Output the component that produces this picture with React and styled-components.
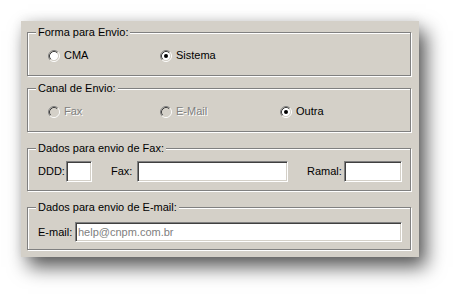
import React from "react";
import styled, { createGlobalStyle } from "styled-components";

const GlobalStyle = createGlobalStyle`
  body {
    margin: 0;
    background: #ffffff;
    font-family: "Liberation Sans", Arial, sans-serif;
    font-size: 11px;
    color: #000000;
  }
`;

const Page = styled.div`
  padding: 21px 0 0 21px;
  width: 461px;
  height: 299px;
  box-sizing: border-box;
`;

const Panel = styled.div`
  width: 398px;
  height: 236px;
  box-sizing: border-box;
  background: #d4d0c8;
  padding: 11px 8px 0 6px;
  box-shadow: 7px 10px 18px rgba(0, 0, 0, 0.66), 0 -2px 10px rgba(0, 0, 0, 0.07);
`;

const Group = styled.div`
  box-sizing: border-box;
  width: 384px;
  height: ${(p) => p.$h}px;
  margin-top: ${(p) => p.$mt || 0}px;
  border: 1px solid #808080;
  box-shadow: 1px 1px 0 #ffffff, inset 1px 1px 0 #ffffff;
`;

const Legend = styled.div`
  width: fit-content;
  margin: -7px 0 0 8px;
  padding: 0 2px;
  line-height: 13px;
  background: #d4d0c8;
`;

const RadioRow = styled.div`
  display: grid;
  grid-template-columns: 112px 120px auto;
  margin-top: 10px;
  padding-left: 20px;
`;

const RadioItem = styled.label`
  display: flex;
  align-items: center;
  gap: 4px;
  line-height: 13px;
  color: ${(p) => (p.$disabled ? "#808080" : "#000000")};
  text-shadow: ${(p) => (p.$disabled ? "1px 1px 0 #ffffff" : "none")};
`;

const FieldRow = styled.div`
  display: flex;
  align-items: center;
  margin-top: ${(p) => p.$mt}px;
  padding-left: 10px;
`;

const FieldLabel = styled.span`
  width: ${(p) => p.$w}px;
  margin-left: ${(p) => p.$ml || 0}px;
  line-height: 13px;
  flex-shrink: 0;
`;

const TextBox = styled.input`
  box-sizing: border-box;
  width: ${(p) => p.$w}px;
  height: ${(p) => p.$h || 21}px;
  margin: 0;
  padding: 0 2px;
  border: 1px solid;
  border-color: #808080 #ffffff #ffffff #808080;
  box-shadow: inset 1px 1px 0 #404040, inset -1px -1px 0 #d4d0c8;
  background: #ffffff;
  font-family: "Liberation Sans", Arial, sans-serif;
  font-size: 11px;
  color: #808080;
  outline: none;
  flex-shrink: 0;
`;

function RadioMark({ checked, disabled }) {
  return (
    <svg width="12" height="12" viewBox="0 0 12 12">
      <circle cx="6" cy="6" r="4.2" fill={disabled ? "#d4d0c8" : "#ffffff"} />
      <path d="M2.11 9.89 A5.5 5.5 0 0 1 9.89 2.11" fill="none" stroke="#808080" strokeWidth="1" />
      <path d="M9.89 2.11 A5.5 5.5 0 0 1 2.11 9.89" fill="none" stroke="#ffffff" strokeWidth="1" />
      <path d="M2.82 9.18 A4.5 4.5 0 0 1 9.18 2.82" fill="none" stroke="#404040" strokeWidth="1" />
      <path d="M9.18 2.82 A4.5 4.5 0 0 1 2.82 9.18" fill="none" stroke="#d4d0c8" strokeWidth="1" />
      {checked && <circle cx="6" cy="6" r="2" fill={disabled ? "#808080" : "#000000"} />}
    </svg>
  );
}

function Radio({ label, checked, disabled }) {
  return (
    <RadioItem $disabled={disabled}>
      <RadioMark checked={checked} disabled={disabled} />
      {label}
    </RadioItem>
  );
}

export default function App() {
  return (
    <Page>
      <GlobalStyle />
      <Panel>
        <Group $h={44}>
          <Legend>Forma para Envio:</Legend>
          <RadioRow>
            <Radio label="CMA" />
            <Radio label="Sistema" checked />
          </RadioRow>
        </Group>

        <Group $h={44} $mt={12}>
          <Legend>Canal de Envio:</Legend>
          <RadioRow>
            <Radio label="Fax" disabled />
            <Radio label="E-Mail" disabled />
            <Radio label="Outra" checked />
          </RadioRow>
        </Group>

        <Group $h={43} $mt={16}>
          <Legend>Dados para envio de Fax:</Legend>
          <FieldRow $mt={6}>
            <FieldLabel $w={28}>DDD:</FieldLabel>
            <TextBox $w={26} />
            <FieldLabel $w={26} $ml={19}>Fax:</FieldLabel>
            <TextBox $w={151} />
            <FieldLabel $w={37} $ml={19}>Ramal:</FieldLabel>
            <TextBox $w={58} />
          </FieldRow>
        </Group>

        <Group $h={43} $mt={16}>
          <Legend>Dados para envio de E-mail:</Legend>
          <FieldRow $mt={8}>
            <FieldLabel $w={37}>E-mail:</FieldLabel>
            <TextBox $w={327} $h={20} defaultValue="help@cnpm.com.br" />
          </FieldRow>
        </Group>
      </Panel>
    </Page>
  );
}
